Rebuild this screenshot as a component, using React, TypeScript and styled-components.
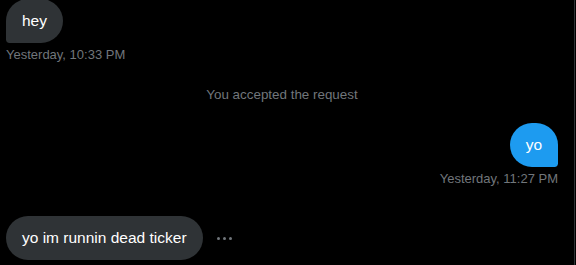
import React from "react";
import styled, { createGlobalStyle } from "styled-components";

const Global = createGlobalStyle`
  html, body { margin: 0; padding: 0; background: #000; }
  body { font-family: "Liberation Sans", Arial, sans-serif; overflow: hidden; }
`;

const Frame = styled.div`
  width: 574px;
  height: 265px;
  border-right: 1px solid #2f3336;
  background: #000;
  box-sizing: content-box;
  overflow: hidden;
`;

const Thread = styled.div`
  display: flex;
  flex-direction: column;
  padding: 0 16px 0 6px;
  margin-top: -1px;
`;

const Row = styled.div<{ $mine?: boolean; $mt?: number }>`
  display: flex;
  align-items: center;
  gap: 14px;
  justify-content: ${(p) => (p.$mine ? "flex-end" : "flex-start")};
  margin-top: ${(p) => p.$mt ?? 0}px;
`;

const Bubble = styled.div<{ $mine?: boolean; $tail?: boolean }>`
  padding: 12px 16px;
  font-size: 15.5px;
  line-height: 20px;
  color: #fff;
  background: ${(p) => (p.$mine ? "#1d9bf0" : "#2f3336")};
  border-radius: 24px;
  ${(p) =>
    p.$tail
      ? p.$mine
        ? "border-bottom-right-radius: 4px;"
        : "border-bottom-left-radius: 4px;"
      : ""}
`;

const Meta = styled.div<{ $mine?: boolean; $mt?: number }>`
  font-size: 13px;
  line-height: 16px;
  color: #71767b;
  margin-top: ${(p) => p.$mt ?? 4}px;
  text-align: ${(p) => (p.$mine ? "right" : "left")};
`;

const System = styled.div`
  font-size: 13.4px;
  line-height: 16px;
  color: #71767b;
  text-align: center;
  margin-top: 24px;
`;

const More = styled.div`
  display: flex;
  gap: 3px;
  span {
    width: 3px;
    height: 3px;
    border-radius: 50%;
    background: #71767b;
  }
`;

export default function App() {
  return (
    <>
      <Global />
      <Frame>
        <Thread>
          <Row>
            <Bubble $tail>hey</Bubble>
          </Row>
          <Meta>Yesterday, 10:33 PM</Meta>
          <System>You accepted the request</System>
          <Row $mine $mt={20}>
            <Bubble $mine $tail>yo</Bubble>
          </Row>
          <Meta $mine>Yesterday, 11:27 PM</Meta>
          <Row $mt={29}>
            <Bubble>yo im runnin dead ticker</Bubble>
            <More>
              <span />
              <span />
              <span />
            </More>
          </Row>
        </Thread>
      </Frame>
    </>
  );
}
